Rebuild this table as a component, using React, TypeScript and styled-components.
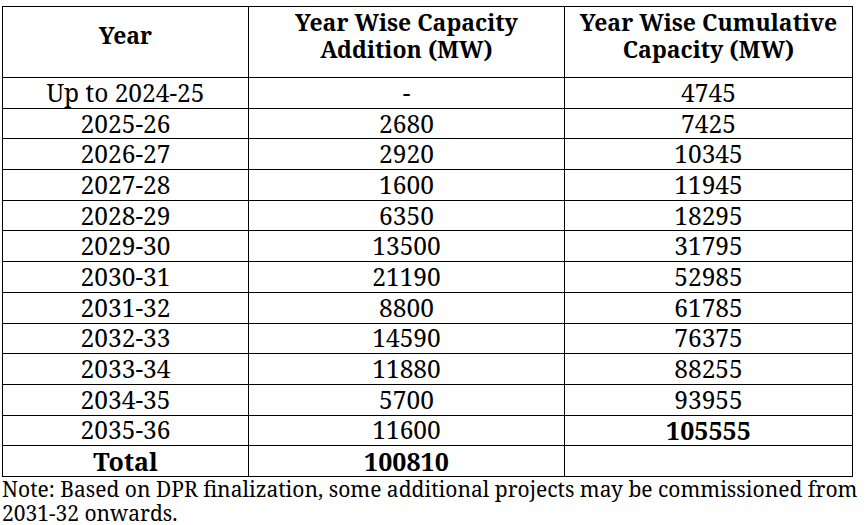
import React from 'react';
import styled, { createGlobalStyle } from 'styled-components';

const GlobalStyle = createGlobalStyle`
  html, body {
    margin: 0;
    padding: 0;
    background: #ffffff;
  }
  body {
    font-family: "Noto Serif", "Liberation Serif", serif;
    color: #000;
  }
`;

const Page = styled.div`
  width: 865px;
  height: 525px;
  padding: 6px 0 0 2px;
  box-sizing: border-box;
  overflow: hidden;
`;

const Table = styled.table`
  width: 850px;
  border-collapse: collapse;
  table-layout: fixed;
  font-family: "Noto Serif", "Liberation Serif", serif;
`;

const HeadRow = styled.tr`
  height: 71px;
`;

const BodyRow = styled.tr`
  height: 30.7px;
`;

const HeadCell = styled.th`
  border: 1px solid #000;
  padding: 0 4px 13px;
  font-size: 23px;
  font-weight: bold;
  line-height: 27px;
  text-align: center;
  vertical-align: middle;
`;

const Cell = styled.td<{ $bold?: boolean }>`
  border: 1px solid #000;
  padding: 0;
  font-size: ${p => (p.$bold ? '25px' : '24.5px')};
  font-weight: ${p => (p.$bold ? 'bold' : 'normal')};
  line-height: 26px;
  text-align: center;
  vertical-align: middle;
  white-space: nowrap;
`;

const Note = styled.p`
  margin: 0;
  font-size: 21px;
  line-height: 24px;
  white-space: nowrap;
`;

const rows: [string, string, string][] = [
  ['Up to 2024-25', '-', '4745'],
  ['2025-26', '2680', '7425'],
  ['2026-27', '2920', '10345'],
  ['2027-28', '1600', '11945'],
  ['2028-29', '6350', '18295'],
  ['2029-30', '13500', '31795'],
  ['2030-31', '21190', '52985'],
  ['2031-32', '8800', '61785'],
  ['2032-33', '14590', '76375'],
  ['2033-34', '11880', '88255'],
  ['2034-35', '5700', '93955'],
  ['2035-36', '11600', '105555'],
];

const App: React.FC = () => {
  return (
    <Page>
      <GlobalStyle />
      <Table>
        <colgroup>
          <col style={{ width: 246 }} />
          <col style={{ width: 316 }} />
          <col style={{ width: 288 }} />
        </colgroup>
        <thead>
          <HeadRow>
            <HeadCell>Year</HeadCell>
            <HeadCell>
              Year Wise Capacity
              <br />
              Addition (MW)
            </HeadCell>
            <HeadCell>
              Year Wise Cumulative
              <br />
              Capacity (MW)
            </HeadCell>
          </HeadRow>
        </thead>
        <tbody>
          {rows.map((r, i) => (
            <BodyRow key={r[0]}>
              <Cell>{r[0]}</Cell>
              <Cell>{r[1]}</Cell>
              <Cell $bold={i === rows.length - 1}>{r[2]}</Cell>
            </BodyRow>
          ))}
          <BodyRow>
            <Cell $bold>Total</Cell>
            <Cell $bold>100810</Cell>
            <Cell></Cell>
          </BodyRow>
        </tbody>
      </Table>
      <Note>
        Note: Based on DPR finalization, some additional projects may be commissioned from
        <br />
        2031-32 onwards.
      </Note>
    </Page>
  );
};

export default App;
